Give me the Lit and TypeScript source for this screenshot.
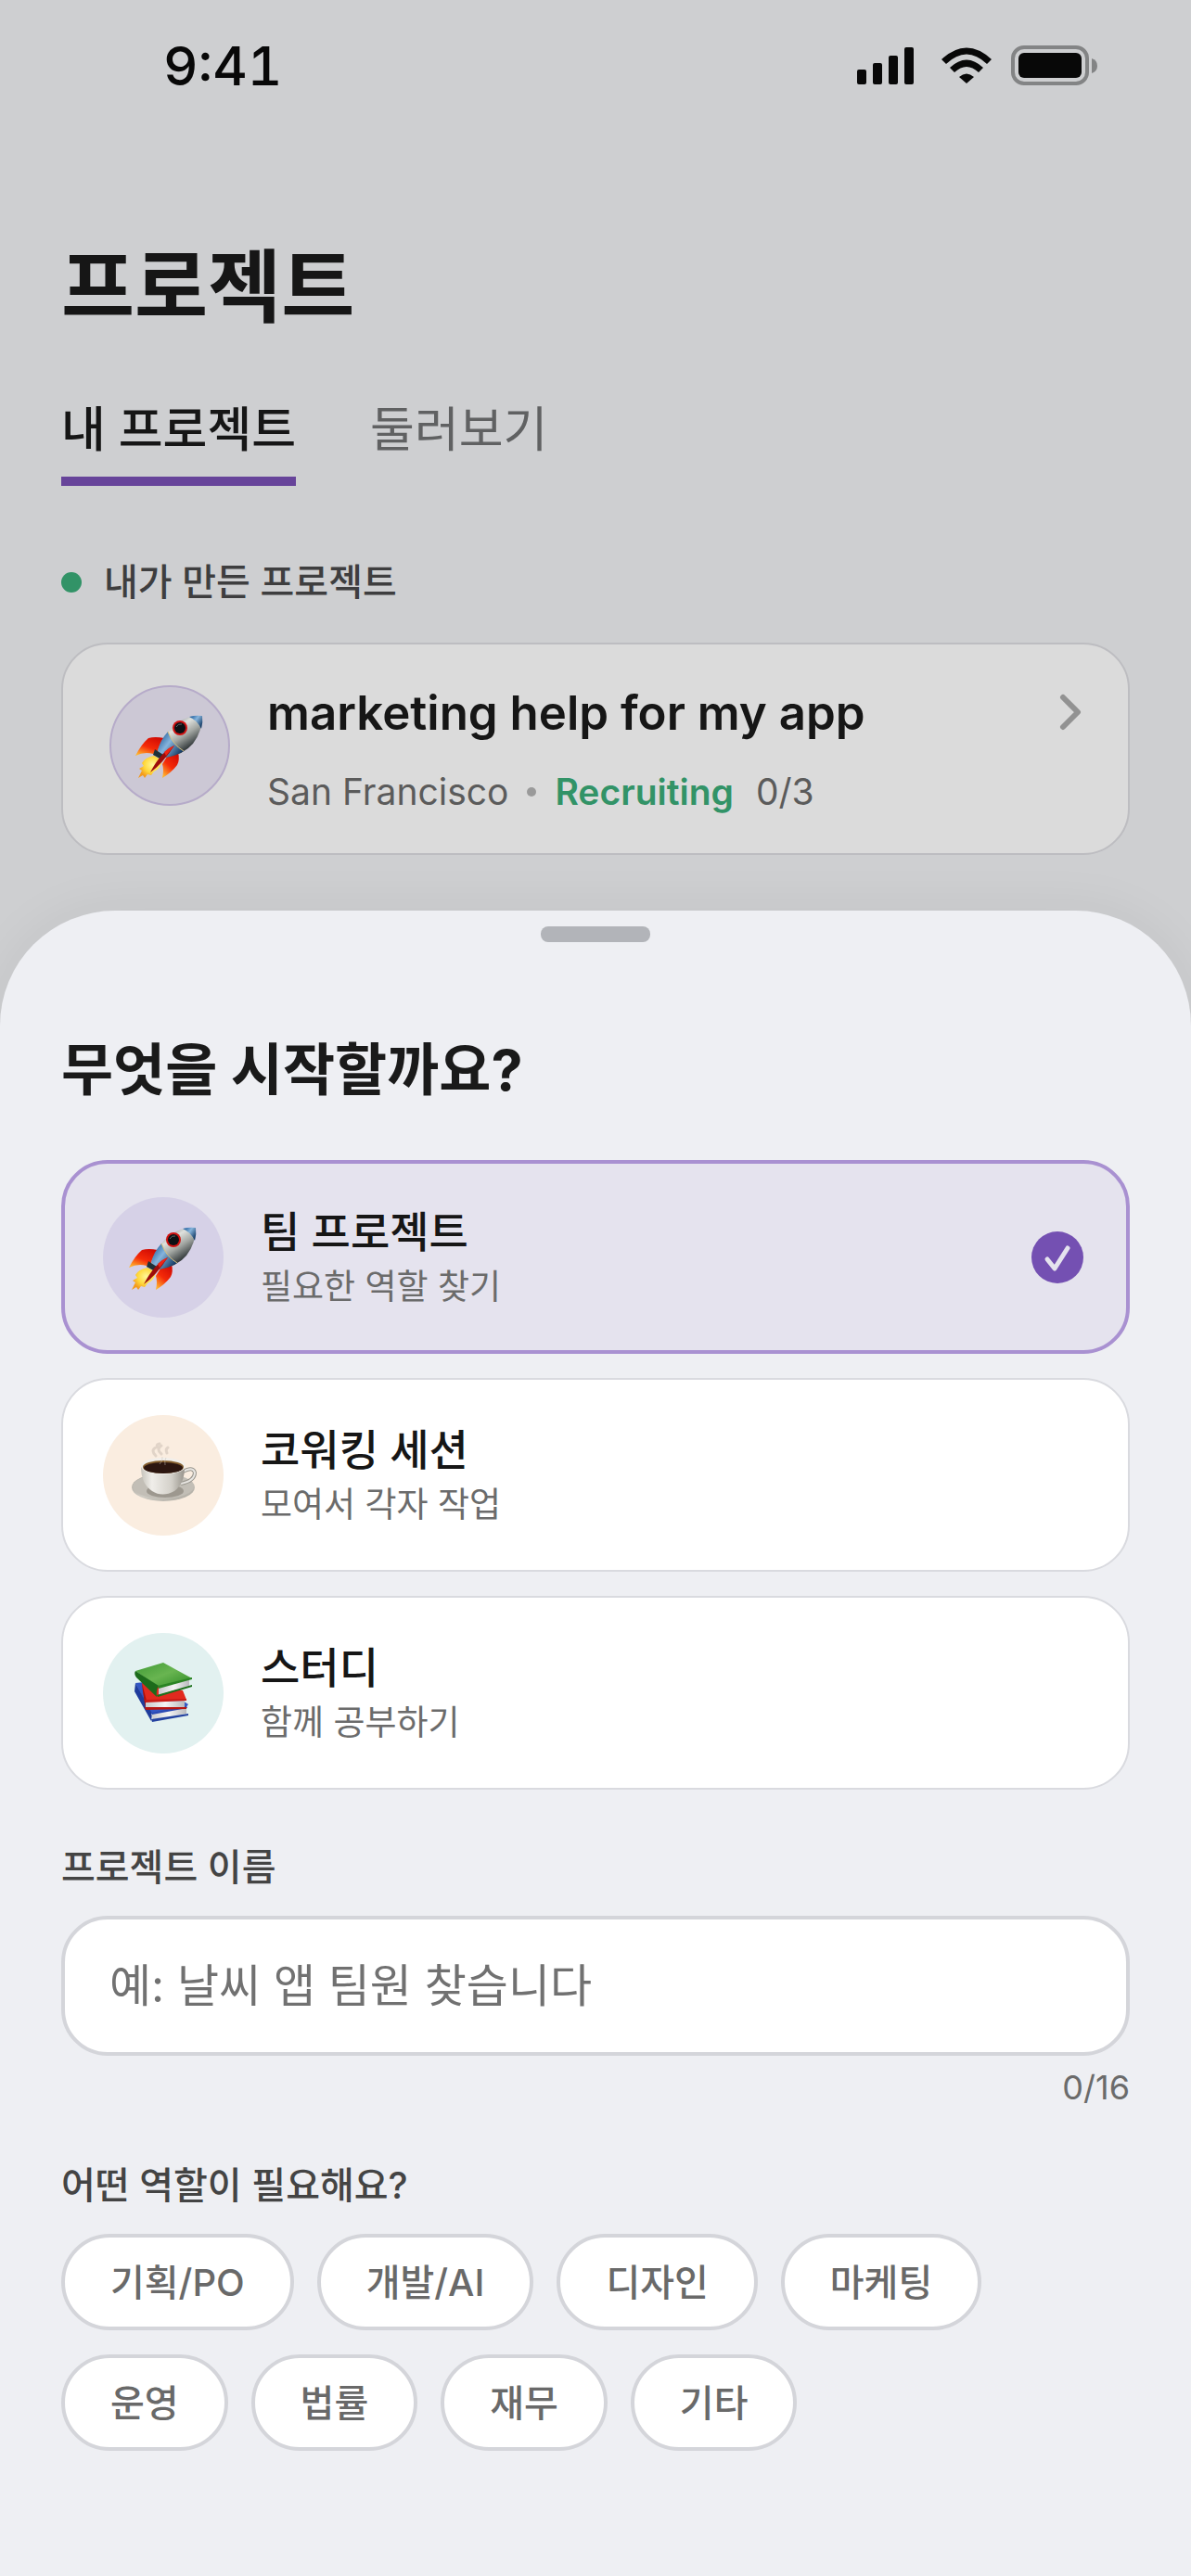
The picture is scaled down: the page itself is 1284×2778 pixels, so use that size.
import { LitElement, css, html, svg } from "lit";
import { customElement, property, state } from "lit/decorators.js";
import { classMap } from "lit/directives/class-map.js";

type Kind = "project" | "coworking" | "study";

interface KindOption {
  id: Kind;
  title: string;
  description: string;
}

const KINDS: KindOption[] = [
  { id: "project", title: "팀 프로젝트", description: "필요한 역할 찾기" },
  { id: "coworking", title: "코워킹 세션", description: "모여서 각자 작업" },
  { id: "study", title: "스터디", description: "함께 공부하기" },
];

const ROLES = [
  "기획/PO",
  "개발/AI",
  "디자인",
  "마케팅",
  "운영",
  "법률",
  "재무",
  "기타",
];

const NAME_LIMIT = 16;

// Emoji artwork --------------------------------------------------------------

const rocket = svg`
  <defs>
    <linearGradient id="hull" x1="0.3" y1="0.1" x2="0.75" y2="0.75">
      <stop offset="0" stop-color="#7d868b" />
      <stop offset="0.3" stop-color="#dfe1dd" />
      <stop offset="0.6" stop-color="#a3a7a3" />
      <stop offset="1" stop-color="#2c3335" />
    </linearGradient>
    <linearGradient id="steel" x1="0.1" y1="0.2" x2="0.9" y2="0.8">
      <stop offset="0" stop-color="#2f6ba6" />
      <stop offset="0.4" stop-color="#86b4dc" />
      <stop offset="1" stop-color="#153c66" />
    </linearGradient>
    <linearGradient id="fin" x1="0.8" y1="0" x2="0.2" y2="1">
      <stop offset="0" stop-color="#cf0a04" />
      <stop offset="0.55" stop-color="#f52a08" />
      <stop offset="1" stop-color="#ffb52e" />
    </linearGradient>
    <radialGradient id="flame" cx="0.6" cy="0.4" r="0.6">
      <stop offset="0" stop-color="#fff79a" />
      <stop offset="0.6" stop-color="#ffd83a" />
      <stop offset="1" stop-color="#f39a1c" />
    </radialGradient>
  </defs>
  <path d="M30 28 Q20 26 13 28 Q5 35 -1 47 Q9 42 18 45 L24 41Z" fill="url(#fin)" />
  <path d="M45 43 Q47 52 44 57 Q38 65 28 71 Q30 62 28 56 L33 48Z" fill="url(#fin)" />
  <path
    d="M19 47 Q9 49 6 55 L8 58 L3 61 L6 63 L2 71 L7 68 L9 71 L12 67 L16 68 L19 64 Q26 61 28 52Z"
    fill="url(#flame)"
  />
  <path
    d="M71 4 Q58 3 46 10 Q31 20 23 41 L31 49 Q51 46 61 34 Q71 21 71 4Z"
    fill="url(#hull)"
  />
  <path d="M34 21 Q26 30 23 41 L31 49 Q43 47 51 42 Q39 35 34 21Z" fill="url(#steel)" />
  <path d="M71 4 Q64 3 57 5 Q66 9 70 18 Q72 11 71 4Z" fill="url(#steel)" />
  <path d="M34 21 Q39 35 51 42" fill="none" stroke="#d8c07c" />
  <circle cx="47" cy="17" r="8" fill="#cf1212" />
  <circle cx="47" cy="17" r="6" fill="#0c1014" />
  <path d="M43 16 Q45 12 49 13" fill="none" stroke="#5d6469" />
  <path d="M20 40 L29 46 L27 51 L18 46Z" fill="#1f3038" />
  <path d="M41 36 Q27 42 15 65 Q28 56 41 36Z" fill="#9d0c0a" />
  <path d="M41 36 Q35 38 30 43 L32 47Z" fill="#ee2414" />
`;

const coffee = svg`
  <defs>
    <linearGradient id="saucer" x1="0" y1="0" x2="1" y2="1">
      <stop offset="0" stop-color="#a29e96" />
      <stop offset="0.5" stop-color="#cfccc4" />
      <stop offset="1" stop-color="#a9a59c" />
    </linearGradient>
    <linearGradient id="cup" x1="0" y1="0" x2="1" y2="0">
      <stop offset="0" stop-color="#c6c3bb" />
      <stop offset="0.25" stop-color="#f0eeea" />
      <stop offset="0.7" stop-color="#d3d0c9" />
      <stop offset="1" stop-color="#98948c" />
    </linearGradient>
  </defs>
  <path
    d="M28 15 Q22 9 28 6 M34 13 Q28 8 34 4 M31 7 Q27 3 32 2 M40 12 Q38 8 41 6"
    fill="none"
    stroke="#b3a79b"
    stroke-width="3"
    stroke-linecap="round"
    opacity="0.35"
  />
  <ellipse cx="36" cy="49" rx="34" ry="15" fill="url(#saucer)" />
  <ellipse cx="36" cy="48" rx="33" ry="13" fill="#c2beb6" />
  <ellipse cx="38" cy="53" rx="20" ry="7" fill="#8d887f" opacity="0.7" />
  <path
    d="M57 32 Q68 26 70 33 Q70 42 55 45"
    fill="none"
    stroke="#9a978f"
    stroke-width="4"
  />
  <path
    d="M57 32 Q68 26 70 33 Q70 42 55 45"
    fill="none"
    stroke="#e8e6e2"
    stroke-width="2"
  />
  <path d="M12 27 Q12 45 24 53 Q35 60 48 53 Q59 45 59 27Z" fill="url(#cup)" />
  <ellipse cx="36" cy="26" rx="24" ry="9" fill="#f1efeb" />
  <ellipse cx="36" cy="27" rx="22" ry="7" fill="#86602f" />
  <ellipse cx="36" cy="28" rx="21" ry="6" fill="#2c1610" />
  <path d="M32 24 Q36 20 35 16 M38 25 Q37 20 39 17" fill="none" stroke="#c9c2ba" opacity="0.5" />
`;

const books = svg`
  <defs>
    <linearGradient id="green" x1="0" y1="0" x2="1" y2="1">
      <stop offset="0" stop-color="#3f9a35" />
      <stop offset="0.5" stop-color="#69b551" />
      <stop offset="1" stop-color="#2d8a24" />
    </linearGradient>
    <linearGradient id="paper" x1="0" y1="0" x2="1" y2="0">
      <stop offset="0" stop-color="#c9c9cc" />
      <stop offset="0.5" stop-color="#f4f4f5" />
      <stop offset="1" stop-color="#b9b9bd" />
    </linearGradient>
  </defs>
  <path d="M6 25 L16 24 L60 46 L63 48 L60 52 L23 59Z" fill="#3457c4" />
  <path d="M6 25 L5 34 L23 66 L24 58Z" fill="#1f3c9c" />
  <path d="M23 58 L61 51 L61 58 L25 64Z" fill="url(#paper)" />
  <path d="M23 57 L61 50 L62 52 L24 59Z" fill="#2a49b4" />
  <path d="M23 64 L63 58 L63 60 L24 67Z" fill="#23419f" />
  <path d="M13 25 L57 33 L61 43 L16 45Z" fill="#e22a1f" />
  <path d="M13 25 L14 34 L17 53 L18 44Z" fill="#a81210" />
  <path d="M17 45 L59 44 L59 51 L17 51Z" fill="url(#paper)" />
  <path d="M16 43 L61 42 L61 44 L17 46Z" fill="#c91b16" />
  <path d="M16 51 L61 51 L61 53 L17 54Z" fill="#b81512" />
  <path d="M6 12 L36 3 L67 20 L31 29Z" fill="url(#green)" />
  <path d="M6 12 Q4 15 7 19 L29 40 Q28 33 31 28Z" fill="#1c6b1b" />
  <path d="M31 30 L64 21 L64 28 L31 38Z" fill="url(#paper)" />
  <path d="M30 28 L67 19 L67 21 L31 31Z" fill="#2b8424" />
  <path d="M29 38 L67 27 L67 29 L30 40Z" fill="#1d701b" />
`;

const ARTWORK = { project: rocket, coworking: coffee, study: books };

@customElement("emoji-badge")
export class EmojiBadge extends LitElement {
  /**
   * Which picture to draw
   */
  @property({ type: String, reflect: true })
  kind: Kind = "project";

  /**
   * Outlined variant, drawn on the dimmed page
   */
  @property({ type: Boolean, reflect: true })
  outlined = false;

  render() {
    return html`<svg viewBox="0 0 72 72" aria-hidden="true">
      ${ARTWORK[this.kind]}
    </svg>`;
  }

  static styles = css`
    :host {
      display: flex;
      flex: none;
      align-items: center;
      justify-content: center;
      box-sizing: border-box;
      width: 130px;
      height: 130px;
      border-radius: 50%;
      background: #d6d1e7;
    }

    :host([kind="coworking"]) {
      background: #faede0;
    }

    :host([kind="study"]) {
      background: #e2f1f0;
    }

    :host([outlined]) {
      border: 2px solid #b6abc9;
      background: #ccc8d5;
    }

    svg {
      width: 72px;
      height: 72px;
      overflow: visible;
    }
  `;
}

@customElement("status-bar")
export class StatusBar extends LitElement {
  render() {
    return html`
      <time class="time">9:41</time>
      <div class="indicators">
        <svg width="70" height="42" viewBox="0 0 70 42" aria-hidden="true">
          <rect x="0" y="25" width="10" height="16" rx="2" />
          <rect x="17" y="18" width="10" height="23" rx="2" />
          <rect x="34" y="10" width="10" height="31" rx="2" />
          <rect x="51" y="1" width="10" height="40" rx="2" />
        </svg>
        <svg width="54" height="40" viewBox="0 0 54 40" aria-hidden="true">
          <path d="M0 13 Q27 -12 54 13 L49 18 Q27 -3 5 18Z" />
          <path d="M9 22 Q27 5 45 22 L40 27 Q27 15 14 27Z" />
          <path d="M19 32 Q27 25 35 32 L27 39Z" />
        </svg>
        <svg width="94" height="44" viewBox="0 0 94 44" aria-hidden="true">
          <rect class="shell" x="2" y="2" width="80" height="39" rx="12" />
          <rect x="8" y="8" width="68" height="27" rx="6" />
          <path class="cap" d="M87 14 Q93 16 93 22 Q93 28 87 30Z" />
        </svg>
      </div>
    `;
  }

  static styles = css`
    :host {
      display: flex;
      align-items: center;
      justify-content: space-between;
      box-sizing: border-box;
      height: 142px;
      padding: 0 100px 0 176px;
      color: #080808;
    }

    .time {
      font-size: 58px;
      font-weight: 500;
      font-variant-numeric: tabular-nums;
      line-height: 64px;
    }

    .indicators {
      display: flex;
      align-items: center;
      gap: 21px;
    }

    svg {
      fill: currentColor;
    }

    .shell {
      fill: none;
      stroke: #838485;
      stroke-width: 4px;
    }

    .cap {
      fill: #838485;
    }
  `;
}

@customElement("app-root")
export class AppRoot extends LitElement {
  // State --------------------------------------------------------------------

  @state()
  private kind: Kind = "project";

  @state()
  private name = "";

  @state()
  private roles: string[] = [];

  // Handlers -----------------------------------------------------------------

  private onName(event: Event) {
    this.name = (event.target as HTMLInputElement).value;
  }

  private toggleRole(role: string) {
    this.roles = this.roles.includes(role)
      ? this.roles.filter((item) => item !== role)
      : [...this.roles, role];
  }

  // Render -------------------------------------------------------------------

  render() {
    return html`
      <status-bar></status-bar>
      ${this.renderPage()} ${this.renderSheet()}
    `;
  }

  private renderPage() {
    return html`<main class="page">
      <h1 class="page-title">프로젝트</h1>
      <nav class="tabs">
        <button class="tab active" type="button">내 프로젝트</button>
        <button class="tab" type="button">둘러보기</button>
      </nav>
      <h2 class="section-title"><span class="status-dot"></span>내가 만든 프로젝트</h2>
      <a class="card" href="#project">
        <emoji-badge kind="project" outlined></emoji-badge>
        <span class="card-text">
          <span class="card-title">marketing help for my app</span>
          <span class="card-meta">
            <span>San Francisco</span>
            <span class="separator"></span>
            <span class="recruiting">Recruiting</span>
            <span class="count">0/3</span>
          </span>
        </span>
        <svg class="chevron" viewBox="0 0 24 40" aria-hidden="true">
          <path d="M4 4 L20 20 L4 36" />
        </svg>
      </a>
    </main>`;
  }

  private renderSheet() {
    return html`<section class="sheet" role="dialog" aria-labelledby="sheet-title">
      <div class="handle"></div>
      <h2 class="sheet-title" id="sheet-title">무엇을 시작할까요?</h2>
      <div class="options" role="radiogroup" aria-labelledby="sheet-title">
        ${KINDS.map((option) => this.renderOption(option))}
      </div>
      <label class="field-label" for="project-name">프로젝트 이름</label>
      <input
        class="field"
        id="project-name"
        type="text"
        maxlength=${NAME_LIMIT}
        placeholder="예: 날씨 앱 팀원 찾습니다"
        .value=${this.name}
        @input=${this.onName}
      />
      <div class="counter">${this.name.length}/${NAME_LIMIT}</div>
      <h3 class="field-label" id="roles-label">어떤 역할이 필요해요?</h3>
      <div class="chips" role="group" aria-labelledby="roles-label">
        ${ROLES.map(
          (role) => html`<button
            type="button"
            class=${classMap({ chip: true, picked: this.roles.includes(role) })}
            @click=${() => this.toggleRole(role)}
          >
            ${role}
          </button>`
        )}
      </div>
    </section>`;
  }

  private renderOption(option: KindOption) {
    const selected = this.kind === option.id;
    return html`<label class=${classMap({ option: true, selected })}>
      <input
        class="radio"
        type="radio"
        name="kind"
        .checked=${selected}
        @change=${() => (this.kind = option.id)}
      />
      <emoji-badge kind=${option.id}></emoji-badge>
      <span class="option-text">
        <span class="option-title">${option.title}</span>
        <span class="option-description">${option.description}</span>
      </span>
      ${selected
        ? html`<svg class="check" viewBox="0 0 56 56" aria-hidden="true">
            <circle cx="28" cy="28" r="28" />
            <path d="M17 30 L25 40 L39 18" />
          </svg>`
        : null}
    </label>`;
  }

  // Styles -------------------------------------------------------------------

  static styles = css`
    :host {
      --gutter: 66px;
      --accent: #7450b2;
      display: flex;
      flex-direction: column;
      min-height: 100vh;
      background: #cecfd1;
      color: #161616;
      font-family: Inter, "Noto Sans CJK KR", sans-serif;
    }

    h1,
    h2,
    h3 {
      margin: 0;
    }

    button {
      font-family: inherit;
      cursor: pointer;
    }

    .page {
      padding: 116px var(--gutter) 60px;
    }

    .page-title {
      font-size: 86px;
      font-weight: 700;
      line-height: 104px;
    }

    .tabs {
      display: flex;
      gap: 80px;
      margin-top: 72px;
    }

    .tab {
      padding: 0 0 20px;
      border: 0;
      border-bottom: 10px solid transparent;
      background: none;
      color: #606162;
      font-size: 52px;
      line-height: 60px;
    }

    .tab.active {
      border-color: #67449a;
      color: #161616;
      font-weight: 500;
    }

    .section-title {
      display: flex;
      align-items: center;
      gap: 24px;
      margin-top: 80px;
      color: #3e3e3f;
      font-size: 40px;
      font-weight: 500;
      line-height: 48px;
    }

    .status-dot {
      width: 22px;
      height: 22px;
      border-radius: 50%;
      background: #329367;
    }

    .card {
      display: flex;
      align-items: flex-start;
      gap: 40px;
      margin-top: 41px;
      padding: 44px 50px;
      border: 2px solid #bdbdc1;
      border-radius: 50px;
      background: #dbdbdb;
      color: inherit;
      text-decoration: none;
    }

    .card-text {
      display: flex;
      flex: 1;
      flex-direction: column;
      gap: 33px;
    }

    .card-title {
      font-size: 51px;
      font-weight: 600;
      line-height: 60px;
    }

    .card-meta {
      display: flex;
      align-items: center;
      color: #5b5b5b;
      font-size: 39px;
      line-height: 44px;
    }

    .separator {
      width: 10px;
      height: 10px;
      margin: 0 20px;
      border-radius: 50%;
      background: #9a9a9a;
    }

    .recruiting {
      color: #329367;
      font-weight: 600;
    }

    .count {
      margin-left: 24px;
    }

    .chevron {
      flex: none;
      width: 24px;
      height: 40px;
      margin-top: 9px;
      fill: none;
      stroke: #929292;
      stroke-width: 6px;
      stroke-linecap: round;
      stroke-linejoin: round;
    }

    .sheet {
      display: flex;
      flex: 1;
      flex-direction: column;
      padding: 17px var(--gutter) 100px;
      border-radius: 124px 124px 0 0;
      background: #eeeff3;
      box-shadow: 0 0 60px rgba(0, 0, 0, 0.06);
    }

    .handle {
      align-self: center;
      width: 118px;
      height: 17px;
      border-radius: 8px;
      background: #b2b4b9;
    }

    .sheet-title {
      margin-top: 98px;
      color: #1a1a1a;
      font-size: 61px;
      font-weight: 700;
      line-height: 80px;
    }

    .options {
      display: flex;
      flex-direction: column;
      gap: 26px;
      margin-top: 57px;
    }

    .option {
      display: flex;
      align-items: center;
      gap: 40px;
      box-sizing: border-box;
      min-height: 209px;
      padding: 0 48px 0 43px;
      border: 2px solid #d9dadf;
      border-radius: 50px;
      background: #ffffff;
      cursor: pointer;
    }

    .option.selected {
      padding: 0 46px 0 41px;
      border: 4px solid #a991d1;
      background: #e5e3ee;
    }

    .radio {
      position: absolute;
      opacity: 0;
      pointer-events: none;
    }

    .option-text {
      display: flex;
      flex: 1;
      flex-direction: column;
      gap: 8px;
    }

    .option-title {
      font-size: 46px;
      font-weight: 500;
      line-height: 56px;
    }

    .option-description {
      color: #6b6b6b;
      font-size: 37px;
      line-height: 48px;
    }

    .check {
      flex: none;
      width: 56px;
      height: 56px;
      fill: var(--accent);
    }

    .check path {
      fill: none;
      stroke: #e5e3ee;
      stroke-width: 5px;
      stroke-linecap: round;
      stroke-linejoin: round;
    }

    .field-label {
      margin-top: 60px;
      color: #444444;
      font-size: 40px;
      font-weight: 500;
      line-height: 48px;
    }

    .field {
      box-sizing: border-box;
      width: 100%;
      height: 151px;
      margin-top: 28px;
      padding: 0 48px;
      border: 4px solid #d4d5da;
      border-radius: 50px;
      background: #ffffff;
      color: #161616;
      font-family: inherit;
      font-size: 49px;
      outline: none;
    }

    .field::placeholder {
      color: #717171;
      opacity: 1;
    }

    .counter {
      align-self: flex-end;
      margin-top: 12px;
      color: #6b6b6b;
      font-size: 36px;
      line-height: 44px;
    }

    .chips {
      display: flex;
      flex-wrap: wrap;
      gap: 26px 25px;
      margin-top: 28px;
    }

    .chip {
      height: 104px;
      padding: 0 49px 4px;
      border: 4px solid #d4d5da;
      border-radius: 52px;
      background: #ffffff;
      color: #696969;
      font-size: 40px;
      font-weight: 500;
    }

    .chip.picked {
      border-color: #a991d1;
      background: #e5e3ee;
    }
  `;
}

declare global {
  interface HTMLElementTagNameMap {
    "app-root": AppRoot;
    "emoji-badge": EmojiBadge;
    "status-bar": StatusBar;
  }
}
